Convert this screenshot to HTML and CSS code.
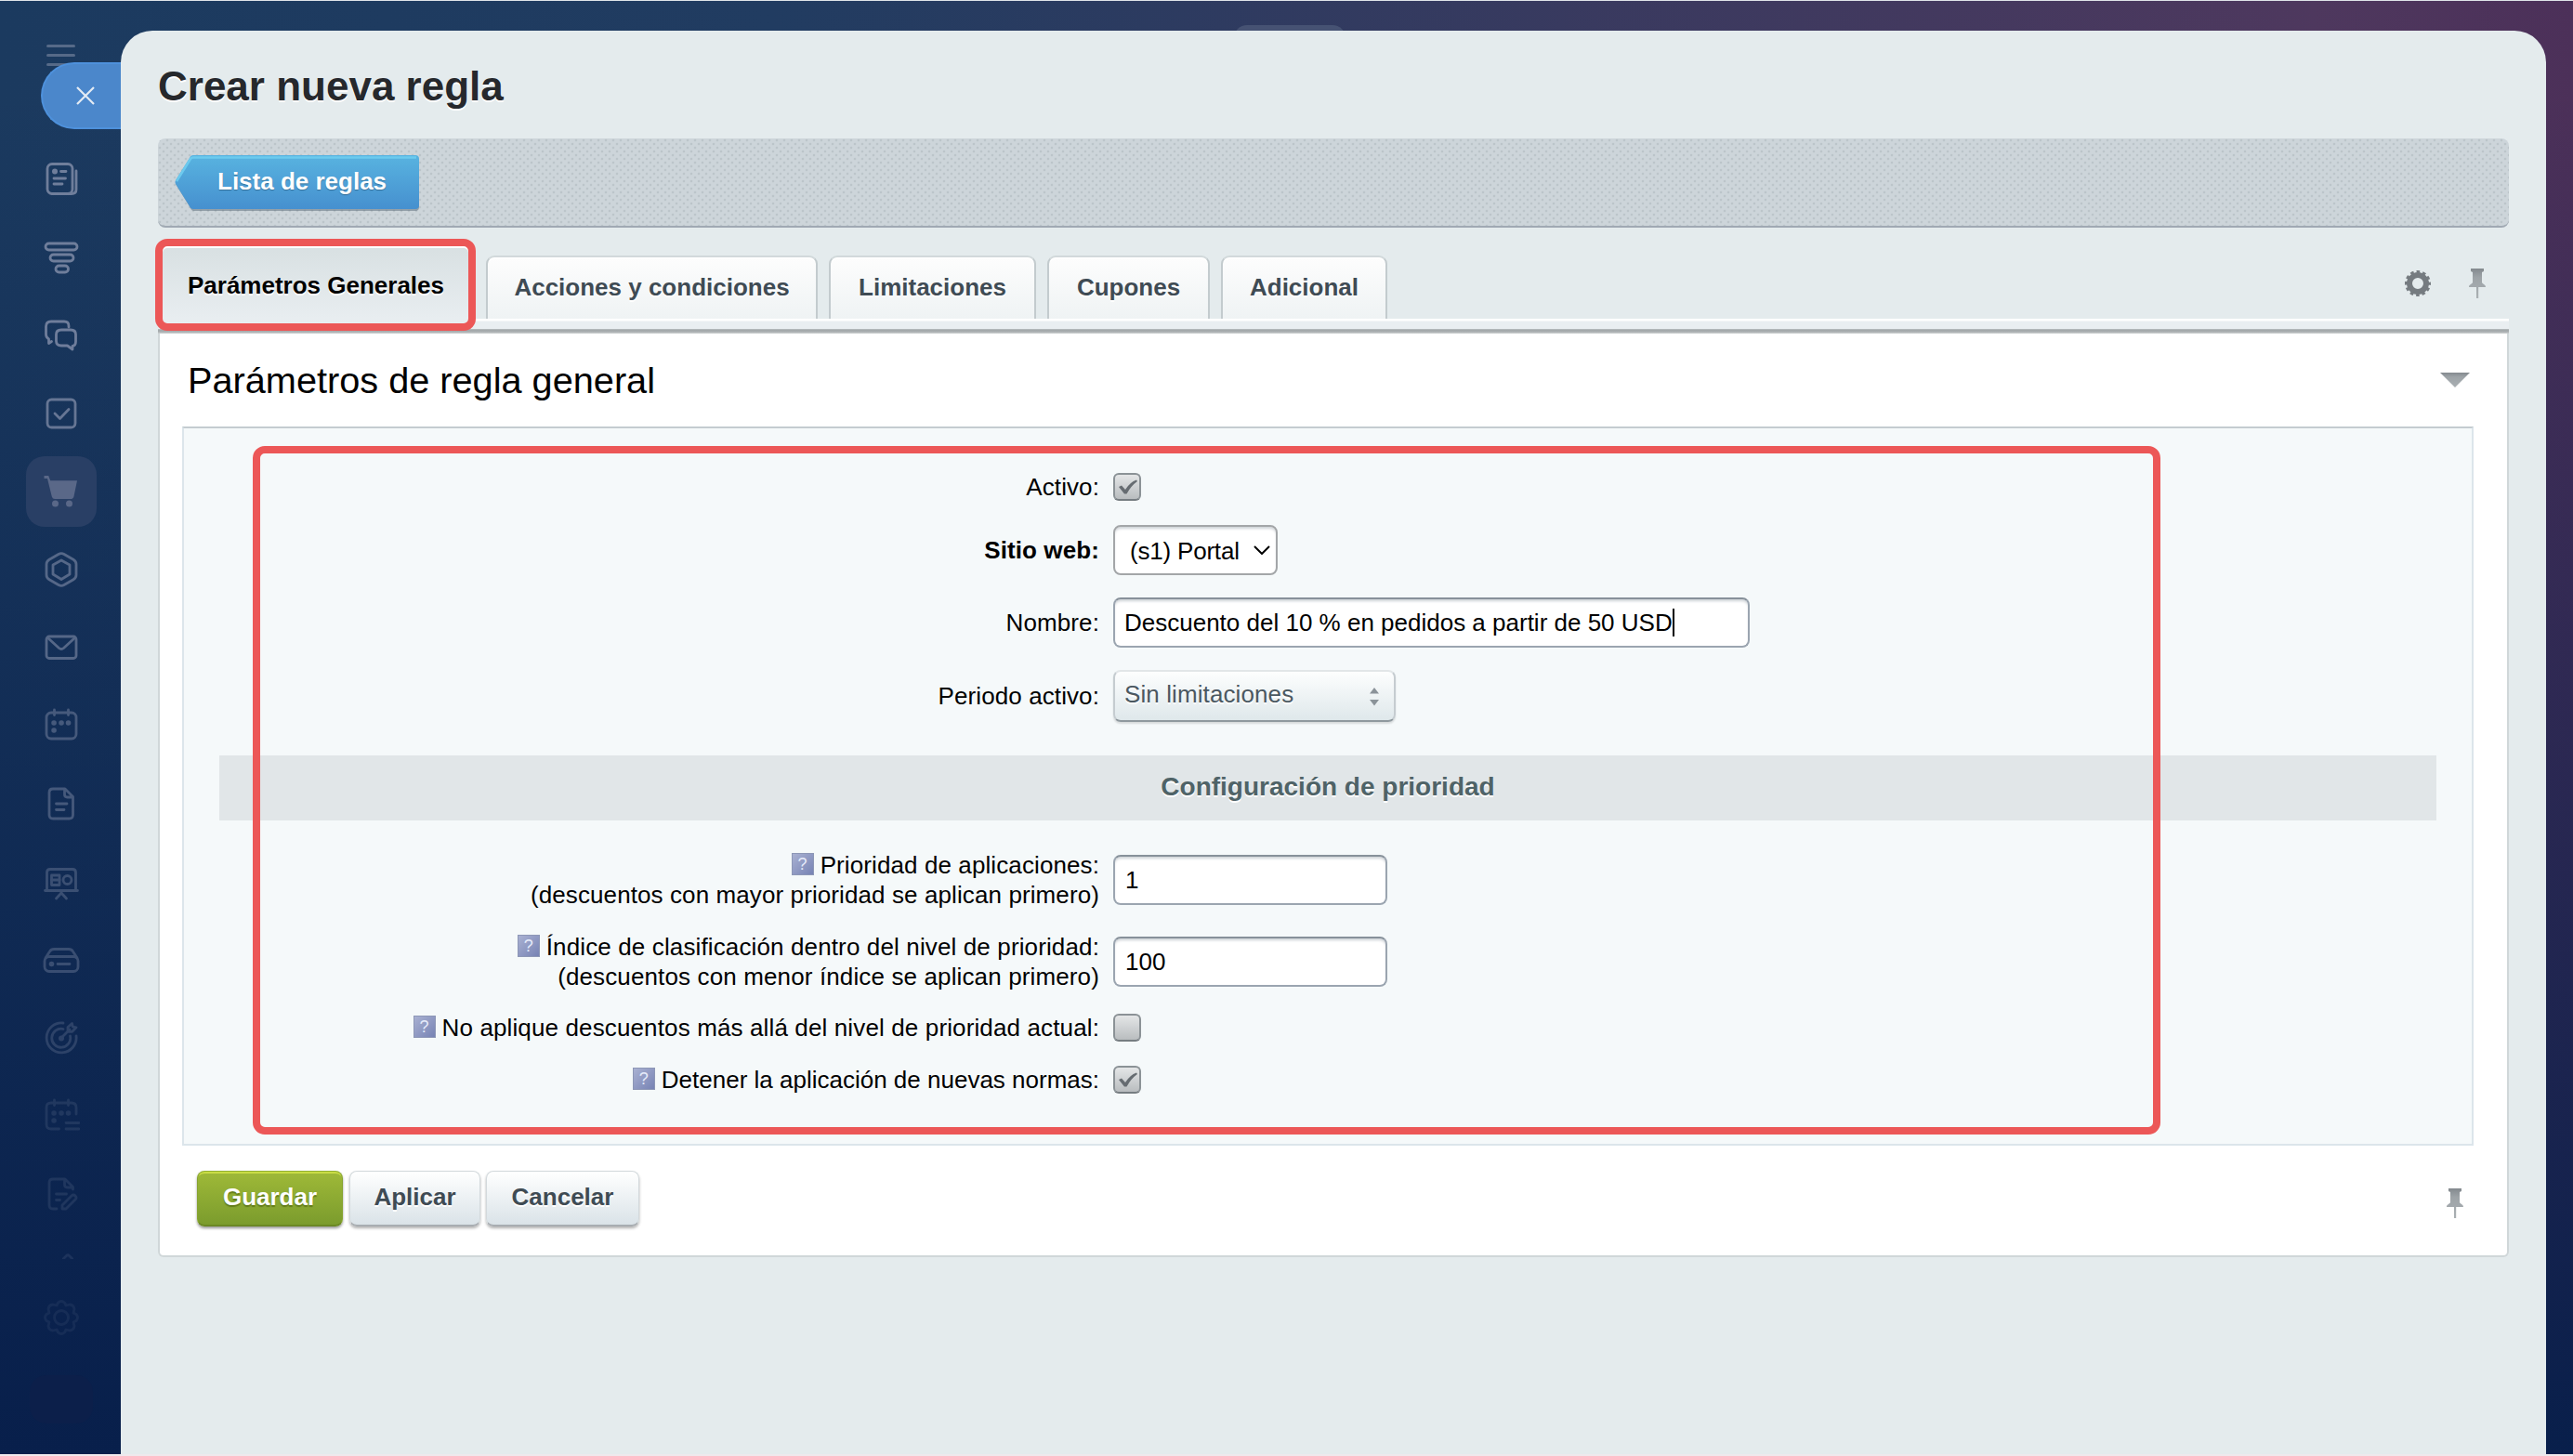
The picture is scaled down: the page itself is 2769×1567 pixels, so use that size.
FILE: index.html
```html
<!DOCTYPE html>
<html lang="es">

<head>
    <meta charset="UTF-8">
    <meta name="viewport" content="width=device-width, initial-scale=1.0">
    <title>Crear nueva regla</title>
    <link rel="stylesheet" href="styles.css">
</head>

<body>

    <!-- shared icons -->
    <svg class="defs" width="0" height="0">
        <defs>
            <linearGradient id="grey" x1="0" y1="0" x2="0" y2="1">
                <stop offset="0" stop-color="#83898e" />
                <stop offset=".3" stop-color="#9da3a7" />
                <stop offset="1" stop-color="#aab0b3" />
            </linearGradient>
            <symbol id="pin" viewBox="0 0 20 34">
                <path fill="url(#grey)" d="M3 1h14v3l-2 1v11c1 2 4 2 4 5H11.200v12H9V21H1c0-3 3-3 4-5V5L3 4z" />
            </symbol>
            <symbol id="check" viewBox="0 0 30 30">
                <path fill="#666c71" d="M6 15l3-1.500 4 4.500Q18 10 25 7.500L26 9Q19 14 14.500 22.500H12z" />
            </symbol>
        </defs>
    </svg>

    <nav class="sidebar">
        <div class="burger"><span></span><span></span><span></span></div>
        <ul class="menu">
            <li class="o1"><svg viewBox="0 0 40 40"><rect x="5" y="3.500" width="27" height="32" rx="5" /><path d="M36 11v20q0 4.500-5 4.500H10M19.500 11.500H25M12 19h12.500M12 25h9" /><circle class="fill" cx="13" cy="11.500" r="3" /></svg></li>
            <li class="o1"><svg viewBox="0 0 40 40"><rect x="3" y="5" width="34" height="7" rx="3.500" /><rect x="8" y="17" width="25" height="7" rx="3.500" /><rect x="14" y="29" width="13.500" height="7" rx="3.500" /></svg></li>
            <li class="o1"><svg viewBox="0 0 40 40"><path d="M28 11V10q0-5-5-5H9Q3.500 5 3.500 10.500V19q0 3 3 5v4.500l3-2" /><path d="M20 14h10q5.500 0 5.500 5v7.500q0 4.500-3.500 5V35l-5.500-4H20q-5.500 0-5.500-5v-7q0-5 5.500-5z" /></svg></li>
            <li class="o2"><svg viewBox="0 0 40 40"><rect x="5" y="5" width="30" height="30" rx="4.500" /><path d="M13 20l5.500 5.500L28 15.500" /></svg></li>
            <li class="active"><svg viewBox="0 0 40 40"><path class="fill" d="M1.500 3h4.700l2 5.200H37l-3.500 17q-.6 2.800-3.500 2.800H13q-2.500 0-3.200-2.500L5 6H1.500z" /><circle class="fill" cx="13.500" cy="33" r="3.500" /><circle class="fill" cx="28.500" cy="33" r="3.500" /></svg></li>
            <li class="o3"><svg viewBox="0 0 40 40"><path d="M17 3.500q3-1.800 6 0L33 9.300q3 1.800 3 5v11.400q0 3.200-3 5l-10 5.800q-3 1.800-6 0L7 30.700q-3-1.800-3-5V14.300q0-3.200 3-5z" /><path d="M20 10l9 5v10l-9 5.500-9-5.500V15z" /></svg></li>
            <li class="o3"><svg viewBox="0 0 40 40"><rect x="4" y="8" width="32" height="23.500" rx="3" /><path d="M6 10l11.500 10.500q2.500 2 5 0L34 10" /></svg></li>
            <li class="o4"><svg viewBox="0 0 40 40"><rect x="4" y="6" width="32" height="28" rx="5" /><path d="M12.500 3v5.500M27.500 3v5.500" /><path class="dots" d="M12 17h.1M20 17h.1M27.500 17h.1M12 25h.1" /></svg></li>
            <li class="o4"><svg viewBox="0 0 40 40"><path d="M24 4H11q-4 0-4 4v24q0 4 4 4h17.500q4 0 4-4V12.500zM23.500 4.500V10q0 3 3 3H32M14.500 20h11.500M14.500 26.500h8.500" /></svg></li>
            <li class="o5"><svg viewBox="0 0 40 40"><path d="M4.500 29V10q0-3.500 3.500-3.500h24q3.500 0 3.500 3.500v19M2.500 29.500h35M20 30v2M14.500 38l5.500-6 5.500 6" /><rect x="9.500" y="13" width="8.500" height="10.500" /><path d="M9.500 18H18" /><circle cx="26.500" cy="18" r="4.500" /></svg></li>
            <li class="o5"><svg viewBox="0 0 40 40"><rect x="2" y="16.500" width="36" height="16" rx="5" /><path d="M3 18l4.500-7q1.500-2.500 4.500-2.500h16q3 0 4.500 2.500l4.500 7M16 24.500h13" /><circle class="fill" cx="9.500" cy="24.500" r="2.800" /></svg></li>
            <li class="o6"><svg viewBox="0 0 40 40"><path d="M22 4A16 16 0 1 0 36 18M22 10.500A10 10 0 1 0 29.500 18M20 20l9-9M27 12V8.500l4.500-4 .8 3.500 3.700.8-4.300 4.500H28z" /><circle class="fill" cx="20" cy="20.500" r="3" /></svg></li>
            <li class="o7"><svg viewBox="0 0 40 40"><path d="M17.500 34H9q-5 0-5-5V11q0-5 5-5h22q5 0 5 5v7M12.500 3v5.500M27.500 3v5.500M25 27.500h14M25 34h14" /><path class="dots" d="M12 17h.1M20 17h.1M27.500 17h.1M12 25h.1" /></svg></li>
            <li class="o7"><svg viewBox="0 0 40 40"><path d="M15 36h-4q-4 0-4-4V8q0-4 4-4h13l8.500 8.500V15M23.500 4.500V10q0 3 3 3H32M14.500 20h11M14.500 26.500h4M21 32l10-10q2-2 4 0t0 4L25 36h-4z" /></svg></li>
        </ul>
        <svg class="more" viewBox="0 0 12 6"><path d="M1 6l3.500-3.500q1.500-1.500 3 0L11 6" /></svg>
        <svg class="settings" viewBox="0 0 40 40"><path d="M16.500 4q3.500-3 7 0l1.500 3 4-1q4.500.5 5 5l-1 4 3 1.500q3 3.500 0 7L33 25l1 4q-.5 4.500-5 5l-4-1-1.500 3q-3.500 3-7 0L15 33l-4 1q-4.500-.5-5-5l1-4-3-1.500q-3-3.500 0-7L7 15l-1-4q.5-4.500 5-5l4 1z" /><circle cx="20" cy="20" r="7.500" /></svg>
        <div class="rocket"></div>
    </nav>

    <a class="close" href="#"><svg viewBox="0 0 20 20"><path d="M1 1l18 18M19 1L1 19" /></svg></a>
    <div class="topbar-item"></div>

    <main class="panel">
        <h1>Crear nueva regla</h1>

        <div class="toolbar">
            <a class="back" href="#">
                <svg viewBox="0 0 265 62">
                    <defs>
                        <linearGradient id="blue" x1="0" y1="0" x2="0" y2="1">
                            <stop offset="0" stop-color="#58b3e0" />
                            <stop offset="1" stop-color="#4690cf" />
                        </linearGradient>
                    </defs>
                    <path class="back-shadow" d="M19 3h240q4 0 4 4v49q0 4-4 4H21q-3 0-4-3L1 31z" />
                    <path fill="url(#blue)" d="M20 0h239q4 0 4 4v50q0 4-4 4H20q-3 0-4-3L1 31q-1-2 0-4L16 3q1-3 4-3z" />
                    <path class="back-light" d="M2 28L17 4q1-1.500 3-1.500h240" />
                </svg>
                <span>Lista de reglas</span>
            </a>
        </div>

        <div class="tabs">
            <a class="tab tab-active" href="#">Parámetros Generales</a>
            <a class="tab tab-acciones" href="#">Acciones y condiciones</a>
            <a class="tab tab-limitaciones" href="#">Limitaciones</a>
            <a class="tab tab-cupones" href="#">Cupones</a>
            <a class="tab tab-adicional" href="#">Adicional</a>
            <div class="tab-tools">
                <svg class="gear" viewBox="0 0 28 28">
                    <circle cx="14" cy="14" r="9" />
                    <circle class="teeth" cx="14" cy="14" r="12.500" />
                </svg>
                <svg class="pin"><use href="#pin" /></svg>
            </div>
        </div>
        <div class="tabs-line"></div>

        <section class="content">
            <div class="content-title">
                <h2>Parámetros de regla general</h2>
                <svg class="arrow" viewBox="0 0 32 16"><path fill="url(#grey)" d="M0 0h32L16 16z" /></svg>
            </div>

            <form class="form">
                <div class="row row-activo">
                    <label>Activo:</label>
                    <div class="checkbox"><svg><use href="#check" /></svg></div>
                </div>
                <div class="row row-sitio">
                    <label><b>Sitio web:</b></label>
                    <div class="select">(s1) Portal
                        <svg viewBox="0 0 18 10"><path d="M1 1l8 8 8-8" /></svg>
                    </div>
                </div>
                <div class="row row-nombre">
                    <label>Nombre:</label>
                    <div class="input input-name"><span>Descuento del 10 % en pedidos a partir de 50 USD</span><i class="caret"></i></div>
                </div>
                <div class="row row-periodo">
                    <label>Periodo activo:</label>
                    <div class="dropdown">Sin limitaciones
                        <svg viewBox="0 0 12 22"><path d="M1 7.500L6 1l5 6.500zM1 14L6 20.500l5-6.500z" /></svg>
                    </div>
                </div>

                <h3>Configuración de prioridad</h3>

                <div class="row row-tall">
                    <label><span class="hint">?</span>Prioridad de aplicaciones:<br>(descuentos con mayor prioridad se aplican primero)</label>
                    <input class="input" type="text" value="1">
                </div>
                <div class="row row-tall row-indice">
                    <label><span class="hint">?</span>Índice de clasificación dentro del nivel de prioridad:<br>(descuentos con menor índice se aplican primero)</label>
                    <input class="input" type="text" value="100">
                </div>
                <div class="row row-limite">
                    <label><span class="hint">?</span>No aplique descuentos más allá del nivel de prioridad actual:</label>
                    <div class="checkbox"></div>
                </div>
                <div class="row row-detener">
                    <label><span class="hint">?</span>Detener la aplicación de nuevas normas:</label>
                    <div class="checkbox"><svg><use href="#check" /></svg></div>
                </div>

                <div class="mark mark-form"></div>
            </form>

            <div class="buttons">
                <button class="btn btn-save" type="button">Guardar</button>
                <button class="btn btn-apply" type="button">Aplicar</button>
                <button class="btn btn-cancel" type="button">Cancelar</button>
                <svg class="pin"><use href="#pin" /></svg>
            </div>
        </section>
    </main>

</body>

</html>
```
FILE: styles.css
```css
* {
    box-sizing: border-box;
}

body {
    margin: 0;
    height: 1567px;
    overflow: hidden;
    position: relative;
    display: flex;
    font-family: "Liberation Sans", Arial, sans-serif;
    font-size: 26px;
    line-height: 32px;
    color: #000;
    background: linear-gradient(to bottom, rgba(8, 31, 75, 0) 0, rgba(8, 31, 75, 0) 100px, #081f4b 100%),
        linear-gradient(to right, #1b3a5f 0, #213c61 30%, #4e385e 90%, #4c3059 100%);
    border-top: 1px solid #dfe4e9;
    border-bottom: 2px solid #efe9ed;
}

a {
    text-decoration: none;
    color: inherit;
}

h1,
h2,
h3 {
    margin: 0;
}

svg {
    display: block;
}

.defs {
    position: absolute;
}

/* left menu */
.sidebar {
    width: 130px;
    flex: none;
    padding-top: 47px;
}

.sidebar svg {
    fill: none;
    stroke: #8590ab;
    stroke-width: 2.8;
    stroke-linecap: round;
    stroke-linejoin: round;
}

.sidebar .fill {
    fill: #8590ab;
    stroke: none;
}

.sidebar .dots {
    stroke-width: 5.5;
}

.burger {
    width: 31px;
    height: 103px;
    margin-left: 50px;
}

.burger span {
    display: block;
    width: 23px;
    height: 3px;
    margin-bottom: 7px;
    background: #566a88;
    border-radius: 2px;
}

.burger span {
    width: 31px;
}

.menu {
    list-style: none;
    margin: 0;
    padding: 0;
}

.menu li {
    display: flex;
    align-items: center;
    justify-content: center;
    width: 76px;
    height: 76px;
    margin: 4px 0 8px 28px;
}

.menu svg,
.settings {
    width: 40px;
    height: 40px;
}

.menu .active {
    background: #293f65;
    border-radius: 20px;
}

.menu .active .fill {
    fill: #5a6888;
}

.o1 svg { opacity: .8; }
.o2 svg { opacity: .72; }
.o3 svg { opacity: .58; }
.o4 svg { opacity: .45; }
.o5 svg { opacity: .36; }
.o6 svg { opacity: .26; }
.o7 svg { opacity: .17; }

.more {
    width: 12px;
    height: 6px;
    margin: 26px 0 0 67px;
    opacity: .15;
}

.settings {
    margin: 43px 0 0 46px;
    opacity: .1;
}

.rocket {
    width: 68px;
    height: 52px;
    margin: 42px 0 0 32px;
    border-radius: 18px;
    background: #0c1f4a;
}

.close {
    position: absolute;
    left: 44px;
    top: 66px;
    width: 86px;
    height: 72px;
    padding: 24px 0 0 36px;
    background: #4b87cb;
    border: 2px solid #4e91dc;
    border-right: 0;
    border-radius: 36px 0 0 36px;
}

.close svg {
    width: 20px;
    height: 20px;
    fill: none;
    stroke: #e4ebf4;
    stroke-width: 2.2;
}

.topbar-item {
    position: absolute;
    left: 1328px;
    top: 26px;
    width: 120px;
    height: 40px;
    border-radius: 14px;
    background: #465273;
}

/* slider */
.panel {
    position: relative;
    width: 2610px;
    height: 1532px;
    margin-top: 32px;
    padding: 36px 40px 0;
    background: #e4ebed;
    border-radius: 34px 34px 0 0;
}

h1 {
    height: 80px;
    font-size: 44px;
    line-height: 48px;
    color: #26282c;
    text-shadow: 0 2px 0 #fff;
}

.toolbar {
    height: 96px;
    padding: 18px;
    border-radius: 8px;
    border-bottom: 2px solid #a0a9b3;
    background: radial-gradient(circle at 2px 2px, #bcc5ca 1px, transparent 1.700px) 0 0 / 8px 8px,
        radial-gradient(circle at 6px 6px, #bcc5ca 1px, transparent 1.700px) 0 0 / 8px 8px,
        #cdd5da;
}

.back {
    display: block;
    position: relative;
    width: 265px;
    height: 62px;
    font-weight: bold;
    color: #fff;
}

.back svg {
    width: 265px;
    height: 62px;
}

.back span {
    position: absolute;
    left: 46px;
    top: 12px;
    text-shadow: 0 1px 1px rgba(0, 0, 0, .3);
}

.back-shadow {
    fill: rgba(60, 80, 95, .4);
}

.back-light {
    fill: none;
    stroke: #6ccaee;
    stroke-width: 2.5;
}

.tabs {
    display: flex;
    align-items: flex-end;
    height: 98px;
    font-weight: bold;
}

.tab {
    height: 68px;
    padding-top: 16px;
    text-align: center;
    color: #3f4b54;
    text-shadow: 0 2px 0 #fff;
    white-space: nowrap;
    border: 2px solid #c3cbce;
    border-top-color: #d2d9db;
    border-bottom: 0;
    border-radius: 9px 9px 0 0;
    background: linear-gradient(#fdfdfd, #eff3f4);
    box-shadow: inset 0 2px 0 #fff;
}

.tab-active {
    position: relative;
    z-index: 2;
    width: 345px;
    height: 99px;
    margin: 0 11px -13px -3px;
    padding: 26px 0 0 1px;
    color: #000;
    border: 8px solid #ec5757;
    border-radius: 13px;
    background: linear-gradient(#d8e0e2, #e9eef1);
}

.tab-acciones {
    width: 357px;
    margin-right: 12px;
}

.tab-limitaciones {
    width: 223px;
    margin-right: 12px;
}

.tab-cupones {
    width: 175px;
    margin-right: 12px;
}

.tab-adicional {
    width: 179px;
}

.tab-tools {
    display: flex;
    align-items: center;
    gap: 40px;
    margin: 0 24px 21px auto;
}

.gear {
    width: 28px;
    height: 28px;
    fill: none;
    stroke: #757b80;
    stroke-width: 6;
}

.teeth {
    stroke-width: 3;
    stroke-dasharray: 3.6 2.945;
    stroke-dashoffset: 1.8;
}

.pin {
    width: 20px;
    height: 34px;
}

.tabs-line {
    height: 16px;
    background: linear-gradient(#fff 0, #fff 2px, #e9eef1 3px, #e9eef1 11px, #c3c8ca 11px, #a2a8aa 12px, #a9aeb0 14px, #d0d4d5 16px);
}

.content {
    height: 994px;
    padding: 0 36px 0 24px;
    background: #fff;
    border: 2px solid #d0d7d9;
    border-top: 0;
    border-radius: 0 0 6px 6px;
}

.content-title {
    display: flex;
    justify-content: space-between;
    height: 100px;
    padding: 27px 4px 0 6px;
}

h2 {
    font-size: 39.700px;
    line-height: 46px;
    font-weight: normal;
}

.arrow {
    width: 32px;
    height: 16px;
    margin-top: 15px;
}

.form {
    position: relative;
    height: 774px;
    padding-top: 31px;
    background: #f5f9fa;
    border: 2px solid #dce5eb;
    border-top-color: #c4ccd0;
}

.row {
    display: grid;
    grid-template-columns: 985px 1fr;
    column-gap: 15px;
    align-items: center;
}

.row-activo { height: 64px; }
.row-sitio { height: 72px; }
.row-nombre { height: 84px; }
.row-periodo { height: 74px; }
.row-tall { height: 88px; }
.row-limite { height: 54px; }
.row-detener { height: 58px; }

.row label {
    text-align: right;
    white-space: nowrap;
    letter-spacing: .1px;
}

.row-indice label,
.row-limite label {
    letter-spacing: .13px;
}

.row-detener label {
    letter-spacing: 0;
}

.hint {
    display: inline-block;
    width: 24px;
    height: 24px;
    margin: -6px 7px 0 0;
    vertical-align: 4px;
    text-align: center;
    font-size: 18px;
    line-height: 22px;
    color: #e6ebfa;
    border: 1px solid #8d97b6;
    background: linear-gradient(135deg, #a9b1d2, #7783b4);
}

.checkbox {
    width: 30px;
    height: 30px;
    border: 2px solid #8b9296;
    border-bottom-color: #767d81;
    border-radius: 6px;
    background: linear-gradient(#e4e6e7, #b9bdbf);
}

.checkbox svg {
    width: 30px;
    height: 30px;
    margin: -2px;
}

.input,
.select {
    width: 295px;
    height: 54px;
    padding: 9px 11px;
    font: inherit;
    line-height: 32px;
    color: #000;
    background: #fff;
    border: 2px solid #9ba5b0;
    border-top-color: #87919a;
    border-radius: 8px;
    box-shadow: inset 0 3px 3px -1px #cdd2d6;
}

.input-name {
    display: flex;
    align-items: center;
    width: 685px;
    padding-left: 10px;
}

.caret {
    width: 2px;
    height: 30px;
    background: #000;
}

.select {
    display: flex;
    align-items: center;
    justify-content: space-between;
    width: 177px;
    padding: 1px 6px 0 16px;
    letter-spacing: -.2px;
    border-color: #a3a6a8;
}

.select svg {
    width: 18px;
    height: 10px;
    margin-bottom: 1px;
    fill: none;
    stroke: #000;
    stroke-width: 2;
}

.dropdown {
    display: flex;
    align-items: center;
    justify-content: space-between;
    width: 304px;
    height: 56px;
    padding: 0 15px 4px 10px;
    letter-spacing: .1px;
    color: #4b5861;
    text-shadow: 0 2px 0 #fff;
    background: linear-gradient(#fdfefe, #dfe8eb);
    border: 2px solid #c5ccd0;
    border-top-color: #e2e6e8;
    border-bottom-color: #8f999e;
    border-radius: 8px;
    box-shadow: 0 2px 2px rgba(0, 0, 0, .12);
}

.dropdown svg {
    width: 12px;
    height: 22px;
    margin-top: 6px;
    fill: #8b9399;
}

h3 {
    height: 70px;
    margin: 27px 38px 20px;
    padding-top: 18px;
    text-align: center;
    font-size: 28px;
    line-height: 32px;
    color: #4f6367;
    text-shadow: 0 2px 0 #fff;
    background: #e1e6e8;
}

/* red highlight over the form */
.mark {
    position: absolute;
    border: 8px solid #ec5757;
    border-radius: 13px;
}

.mark-form {
    left: 74px;
    top: 19px;
    width: 2053px;
    height: 741px;
}

.buttons {
    display: flex;
    align-items: flex-start;
    padding: 27px 10px 0 16px;
}

.btn {
    height: 60px;
    padding: 0 0 3px;
    font: bold 26px/32px "Liberation Sans", Arial, sans-serif;
    color: #3f4b54;
    text-shadow: 0 2px 0 #fff;
    background: linear-gradient(#fff, #dae3e8);
    border: 1px solid #d3d9dc;
    border-bottom: 2px solid #a8adb1;
    border-radius: 8px;
    box-shadow: 0 2px 3px rgba(0, 0, 0, .3);
}

.btn-save {
    width: 157px;
    margin-right: 7px;
    color: #fff;
    text-shadow: 0 2px 1px rgba(60, 80, 0, .5);
    background: linear-gradient(#9fb938, #7b9c2d);
    border-color: #93b030 #86a32f #6b8824;
    box-shadow: inset 0 3px 0 -1px #c9dc45, 0 2px 3px rgba(0, 0, 0, .4);
}

.btn-apply {
    width: 141px;
    margin-right: 6px;
}

.btn-cancel {
    width: 165px;
}

.buttons .pin {
    margin: 18px 0 0 auto;
}
```
